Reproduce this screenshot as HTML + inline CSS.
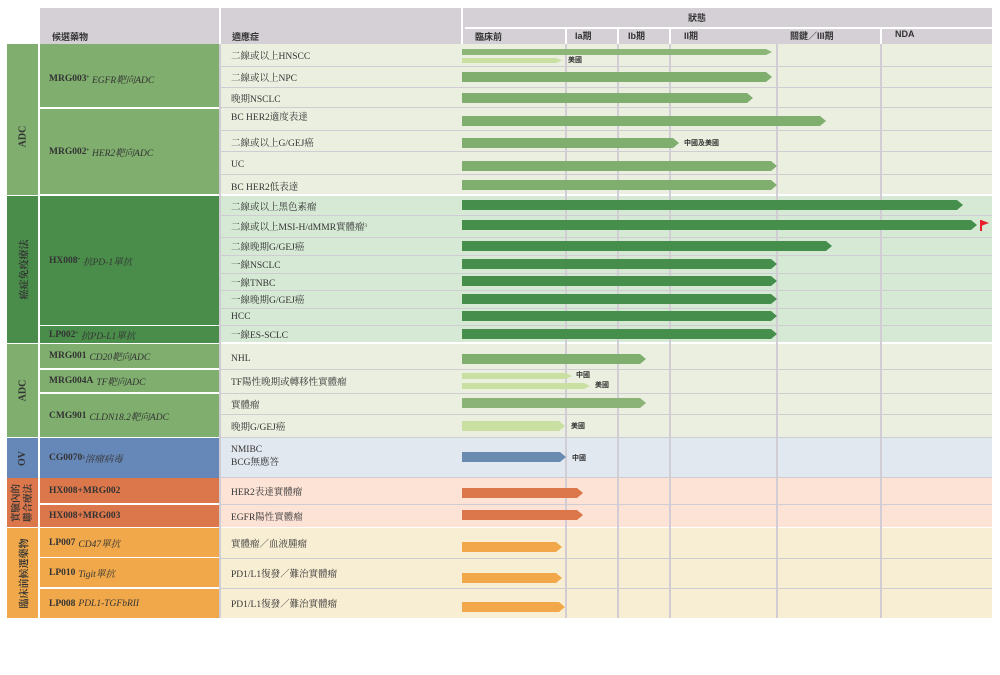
<!DOCTYPE html>
<html><head><meta charset="utf-8">
<style>
*{margin:0;padding:0;box-sizing:border-box}
body{width:1000px;height:675px;background:#fff;position:relative;overflow:hidden;font-family:"Liberation Serif","Noto Serif CJK SC",serif;color:#333}
div{position:absolute}
.h{background:#d5cfd6}
.ht{font-family:"Liberation Sans","Noto Sans CJK TC",sans-serif;font-weight:bold;font-size:9px;color:#333;white-space:nowrap}
.cat{color:#333;font-weight:bold;font-size:10px;display:flex;align-items:center;justify-content:center}
.cat span{display:block;transform:rotate(-90deg);white-space:nowrap;text-align:center}
.d{font-size:9.5px;font-weight:bold;color:#333;display:flex;align-items:center;padding-left:9px;white-space:nowrap}
.d i{font-weight:normal;margin-left:3px}
.t{left:231px;font-size:9.5px;color:#333;white-space:nowrap;display:flex;align-items:center}
.l{left:221px;width:771px;height:1px;background:#d0ccd4}
.v{width:2px;top:44px;height:574px;background:#d2cdd5}
.b{left:462px;clip-path:polygon(0 0,calc(100% - 6px) 0,100% 50%,calc(100% - 6px) 100%,0 100%)}
.n{font-family:"Liberation Sans","Noto Sans CJK TC",sans-serif;font-size:7px;font-weight:bold;color:#333;white-space:nowrap}
</style></head><body>
<div class="h" style="left:40px;top:8px;width:179px;height:36px"></div>
<div class="h" style="left:221px;top:8px;width:240px;height:36px"></div>
<div class="h" style="left:463px;top:8px;width:529px;height:36px"></div>
<div style="left:465px;top:27px;width:527px;height:2px;background:#fff"></div>
<div style="left:565px;top:29px;width:2px;height:15px;background:#fff"></div>
<div style="left:617px;top:29px;width:2px;height:15px;background:#fff"></div>
<div style="left:669px;top:29px;width:2px;height:15px;background:#fff"></div>
<div style="left:880px;top:29px;width:2px;height:15px;background:#fff"></div>
<div class="ht" style="left:52px;top:30px">候選藥物</div>
<div class="ht" style="left:232px;top:30px">適應症</div>
<div class="ht" style="left:688px;top:11px">狀態</div>
<div class="ht" style="left:475px;top:30px">臨床前</div>
<div class="ht" style="left:575px;top:29px">Ia期</div>
<div class="ht" style="left:628px;top:29px">Ib期</div>
<div class="ht" style="left:684px;top:29px">II期</div>
<div class="ht" style="left:790px;top:29px">關鍵／III期</div>
<div class="ht" style="left:895px;top:29px">NDA</div>

<div style="left:221px;top:44px;width:771px;height:151px;background:#eaefdf"></div>
<div style="left:221px;top:196px;width:771px;height:147px;background:#d5e9d4"></div>
<div style="left:221px;top:344px;width:771px;height:93px;background:#eaefdf"></div>
<div style="left:221px;top:437px;width:771px;height:41px;background:#e2e8f0"></div>
<div style="left:221px;top:478px;width:771px;height:49px;background:#fde3d6"></div>
<div style="left:221px;top:528px;width:771px;height:90px;background:#f8eed3"></div>

<div class="l" style="top:66px"></div><div class="l" style="top:87px"></div><div class="l" style="top:107px"></div>
<div class="l" style="top:130px"></div><div class="l" style="top:151px"></div><div class="l" style="top:174px"></div><div class="l" style="top:194px;background:#fff;height:2px"></div>
<div class="l" style="top:215px"></div><div class="l" style="top:237px"></div><div class="l" style="top:255px"></div><div class="l" style="top:273px"></div><div class="l" style="top:290px"></div><div class="l" style="top:308px"></div><div class="l" style="top:325px"></div><div class="l" style="top:342px;background:#fff;height:2px"></div>
<div class="l" style="top:369px"></div><div class="l" style="top:393px"></div><div class="l" style="top:414px"></div><div class="l" style="top:437px"></div>
<div class="l" style="top:477px"></div><div class="l" style="top:504px"></div><div class="l" style="top:527px;background:#fff"></div>
<div class="l" style="top:558px"></div><div class="l" style="top:588px"></div>

<div class="v" style="left:565px"></div><div class="v" style="left:617px"></div><div class="v" style="left:669px"></div><div class="v" style="left:776px"></div><div class="v" style="left:880px"></div>
<div style="left:219px;top:44px;width:2px;height:574px;background:#d0ccd4"></div>

<div class="cat" style="left:7px;top:44px;width:31px;height:151px;background:#7fae6e;padding-top:34px"><span>ADC</span></div>
<div class="cat" style="left:7px;top:196px;width:31px;height:147px;background:#4a8d4b"><span>癌症免疫療法</span></div>
<div class="cat" style="left:7px;top:344px;width:31px;height:93px;background:#7fae6e"><span>ADC</span></div>
<div class="cat" style="left:7px;top:438px;width:31px;height:40px;background:#6688b8"><span>OV</span></div>
<div class="cat" style="left:7px;top:478px;width:31px;height:49px;background:#dc774b"><span style="line-height:12px;font-size:9.5px">實驗內的<br>聯合療法</span></div>
<div class="cat" style="left:7px;top:528px;width:31px;height:90px;background:#f0a84a"><span>臨床前候選藥物</span></div>

<div class="d" style="left:40px;top:44px;width:179px;height:63px;background:#7fae6e;padding-top:6px">MRG003<sup style="font-size:5px">*</sup><i>EGFR靶向ADC</i></div>
<div class="d" style="left:40px;top:109px;width:179px;height:85px;background:#7fae6e">MRG002<sup style="font-size:5px">*</sup><i>HER2靶向ADC</i></div>
<div class="d" style="left:40px;top:196px;width:179px;height:129px;background:#4a8d4b">HX008<sup style="font-size:5px">*</sup><i>抗PD-1單抗</i></div>
<div class="d" style="left:40px;top:326px;width:179px;height:17px;background:#4a8d4b">LP002<sup style="font-size:5px">*</sup><i>抗PD-L1單抗</i></div>
<div class="d" style="left:40px;top:344px;width:179px;height:24px;background:#7fae6e">MRG001<i>CD20靶向ADC</i></div>
<div class="d" style="left:40px;top:370px;width:179px;height:22px;background:#7fae6e">MRG004A<i>TF靶向ADC</i></div>
<div class="d" style="left:40px;top:394px;width:179px;height:43px;background:#7fae6e">CMG901<i>CLDN18.2靶向ADC</i></div>
<div class="d" style="left:40px;top:438px;width:179px;height:40px;background:#6688b8">CG0070<sup style="font-size:5px">3</sup><i style="margin-left:0">溶瘤病毒</i></div>
<div class="d" style="left:40px;top:478px;width:179px;height:25px;background:#dc774b">HX008+MRG002</div>
<div class="d" style="left:40px;top:505px;width:179px;height:22px;background:#dc774b">HX008+MRG003</div>
<div class="d" style="left:40px;top:528px;width:179px;height:29px;background:#f0a84a">LP007<i>CD47單抗</i></div>
<div class="d" style="left:40px;top:558px;width:179px;height:29px;background:#f0a84a">LP010<i>Tigit單抗</i></div>
<div class="d" style="left:40px;top:589px;width:179px;height:29px;background:#f0a84a">LP008<i>PDL1-TGFbRII</i></div>

<div class="t" style="top:44px;height:22px">二線或以上HNSCC</div>
<div class="t" style="top:66px;height:22px">二線或以上NPC</div>
<div class="t" style="top:88px;height:20px">晚期NSCLC</div>
<div class="t" style="top:108px;height:16px">BC HER2適度表達</div>
<div class="t" style="top:131px;height:22px">二線或以上G/GEJ癌</div>
<div class="t" style="top:154px;height:22px">UC</div>
<div class="t" style="top:175px;height:21px">BC HER2低表達</div>
<div class="t" style="top:196px;height:19px">二線或以上黑色素瘤</div>
<div class="t" style="top:215px;height:22px">二線或以上MSI-H/dMMR實體瘤<sup style="font-size:5px">3</sup></div>
<div class="t" style="top:237px;height:18px">二線晚期G/GEJ癌</div>
<div class="t" style="top:255px;height:18px">一線NSCLC</div>
<div class="t" style="top:273px;height:18px">一線TNBC</div>
<div class="t" style="top:290px;height:18px">一線晚期G/GEJ癌</div>
<div class="t" style="top:308px;height:17px">HCC</div>
<div class="t" style="top:325px;height:18px">一線ES-SCLC</div>
<div class="t" style="top:345px;height:27px">NHL</div>
<div class="t" style="top:369px;height:24px">TF陽性晚期或轉移性實體瘤</div>
<div class="t" style="top:393px;height:21px">實體瘤</div>
<div class="t" style="top:414px;height:23px">晚期G/GEJ癌</div>
<div class="t" style="top:441px;height:32px;line-height:13px">NMIBC<br>BCG無應答</div>
<div class="t" style="top:478px;height:26px">HER2表達實體瘤</div>
<div class="t" style="top:504px;height:23px">EGFR陽性實體瘤</div>
<div class="t" style="top:528px;height:30px">實體瘤／血液腫瘤</div>
<div class="t" style="top:558px;height:30px">PD1/L1復發／難治實體瘤</div>
<div class="t" style="top:588px;height:30px">PD1/L1復發／難治實體瘤</div>

<div class="b" style="top:49px;width:310px;height:6px;background:#8bb677"></div>
<div class="b" style="top:58px;width:100px;height:5px;background:#c9e0a2"></div><div class="n" style="left:568px;top:55px">美國</div>
<div class="b" style="top:72px;width:310px;height:10px;background:#7fae6e"></div>
<div class="b" style="top:93px;width:291px;height:10px;background:#7fae6e"></div>
<div class="b" style="top:116px;width:364px;height:10px;background:#7fae6e"></div>
<div class="b" style="top:138px;width:217px;height:10px;background:#7fae6e"></div><div class="n" style="left:684px;top:138px">中國及美國</div>
<div class="b" style="top:161px;width:315px;height:10px;background:#7fae6e"></div>
<div class="b" style="top:180px;width:315px;height:10px;background:#7fae6e"></div>

<div class="b" style="top:200px;width:501px;height:10px;background:#468e4c"></div>
<div class="b" style="top:220px;width:515px;height:10px;background:#468e4c"></div>
<div style="left:980px;top:220px;width:1.5px;height:11px;background:#e8202a"></div>
<div style="left:981px;top:220px;width:8px;height:6px;background:#e8202a;clip-path:polygon(0 0,100% 50%,0 100%)"></div>
<div class="b" style="top:241px;width:370px;height:10px;background:#468e4c"></div>
<div class="b" style="top:259px;width:315px;height:10px;background:#468e4c"></div>
<div class="b" style="top:276px;width:315px;height:10px;background:#468e4c"></div>
<div class="b" style="top:294px;width:315px;height:10px;background:#468e4c"></div>
<div class="b" style="top:311px;width:315px;height:10px;background:#468e4c"></div>
<div class="b" style="top:329px;width:315px;height:10px;background:#468e4c"></div>

<div class="b" style="top:354px;width:184px;height:10px;background:#7fae6e"></div>
<div class="b" style="top:373px;width:110px;height:6px;background:#c9e0a2"></div><div class="n" style="left:576px;top:370px">中國</div>
<div class="b" style="top:383px;width:128px;height:6px;background:#c9e0a2"></div><div class="n" style="left:595px;top:380px">美國</div>
<div class="b" style="top:398px;width:184px;height:10px;background:#8bb277"></div>
<div class="b" style="top:421px;width:103px;height:10px;background:#c9e0a2"></div><div class="n" style="left:571px;top:421px">美國</div>

<div class="b" style="top:452px;width:104px;height:10px;background:#6a8bb0"></div><div class="n" style="left:572px;top:453px">中國</div>
<div class="b" style="top:488px;width:121px;height:10px;background:#dc774b"></div>
<div class="b" style="top:510px;width:121px;height:10px;background:#dc774b"></div>
<div class="b" style="top:542px;width:100px;height:10px;background:#f2a84a"></div>
<div class="b" style="top:573px;width:100px;height:10px;background:#f2a84a"></div>
<div class="b" style="top:602px;width:103px;height:10px;background:#f2a84a"></div>
</body></html>
